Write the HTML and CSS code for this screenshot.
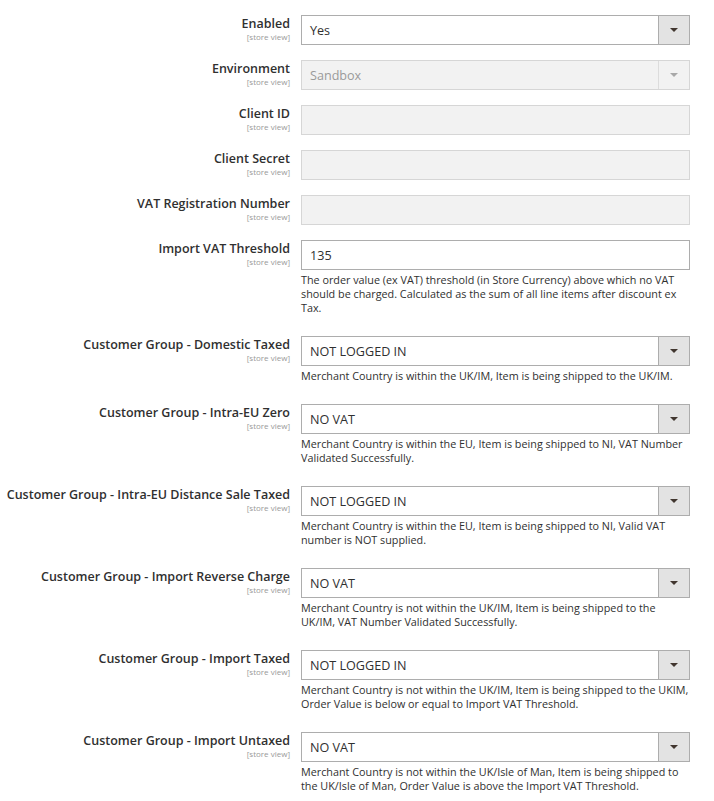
FILE: index.html
```html
<!DOCTYPE html>
<html lang="en">
<head>
<meta charset="utf-8">
<title>Config</title>
<link rel="stylesheet" href="styles.css">
</head>
<body>
<div class="form">
  <div class="row">
    <div class="label"><span class="name">Enabled</span><span class="scope">[store view]</span></div>
    <div class="control"><div class="select"><span class="value">Yes</span><span class="arrow"></span></div></div>
  </div>
  <div class="row">
    <div class="label"><span class="name">Environment</span><span class="scope">[store view]</span></div>
    <div class="control"><div class="select disabled"><span class="value">Sandbox</span><span class="arrow"></span></div></div>
  </div>
  <div class="row">
    <div class="label"><span class="name">Client ID</span><span class="scope">[store view]</span></div>
    <div class="control"><div class="input disabled"></div></div>
  </div>
  <div class="row">
    <div class="label"><span class="name">Client Secret</span><span class="scope">[store view]</span></div>
    <div class="control"><div class="input disabled"></div></div>
  </div>
  <div class="row">
    <div class="label"><span class="name">VAT Registration Number</span><span class="scope">[store view]</span></div>
    <div class="control"><div class="input disabled"></div></div>
  </div>
  <div class="row">
    <div class="label"><span class="name">Import VAT Threshold</span><span class="scope">[store view]</span></div>
    <div class="control"><div class="input"><span class="value">135</span></div>
      <p class="note">The order value (ex VAT) threshold (in Store Currency) above which no VAT should be charged. Calculated as the sum of all line items after discount ex Tax.</p></div>
  </div>
  <div class="row">
    <div class="label"><span class="name">Customer Group - Domestic Taxed</span><span class="scope">[store view]</span></div>
    <div class="control"><div class="select"><span class="value">NOT LOGGED IN</span><span class="arrow"></span></div>
      <p class="note">Merchant Country is within the UK/IM, Item is being shipped to the UK/IM.</p></div>
  </div>
  <div class="row">
    <div class="label"><span class="name">Customer Group - Intra-EU Zero</span><span class="scope">[store view]</span></div>
    <div class="control"><div class="select"><span class="value">NO VAT</span><span class="arrow"></span></div>
      <p class="note">Merchant Country is within the EU, Item is being shipped to NI, VAT Number Validated Successfully.</p></div>
  </div>
  <div class="row">
    <div class="label"><span class="name">Customer Group - Intra-EU Distance Sale Taxed</span><span class="scope">[store view]</span></div>
    <div class="control"><div class="select"><span class="value">NOT LOGGED IN</span><span class="arrow"></span></div>
      <p class="note">Merchant Country is within the EU, Item is being shipped to NI, Valid VAT number is NOT supplied.</p></div>
  </div>
  <div class="row">
    <div class="label"><span class="name">Customer Group - Import Reverse Charge</span><span class="scope">[store view]</span></div>
    <div class="control"><div class="select"><span class="value">NO VAT</span><span class="arrow"></span></div>
      <p class="note">Merchant Country is not within the UK/IM, Item is being shipped to the UK/IM, VAT Number Validated Successfully.</p></div>
  </div>
  <div class="row">
    <div class="label"><span class="name">Customer Group - Import Taxed</span><span class="scope">[store view]</span></div>
    <div class="control"><div class="select"><span class="value">NOT LOGGED IN</span><span class="arrow"></span></div>
      <p class="note">Merchant Country is not within the UK/IM, Item is being shipped to the UKIM, Order Value is below or equal to Import VAT Threshold.</p></div>
  </div>
  <div class="row">
    <div class="label"><span class="name">Customer Group - Import Untaxed</span><span class="scope">[store view]</span></div>
    <div class="control"><div class="select"><span class="value">NO VAT</span><span class="arrow"></span></div>
      <p class="note">Merchant Country is not within the UK/Isle of Man, Item is being shipped to the UK/Isle of Man, Order Value is above the Import VAT Threshold.</p></div>
  </div>
</div>
</body>
</html>
```

FILE: styles.css
```css
html, body {
  margin: 0;
  padding: 0;
  background: #ffffff;
}
body {
  font-family: "Open Sans", "Noto Sans", sans-serif;
  color: #303030;
}
.form {
  display: flex;
  flex-direction: column;
  gap: 15px;
  padding-top: 15px;
}
.row {
  display: grid;
  grid-template-columns: 290px 389px;
  column-gap: 11px;
  align-items: start;
}
.label {
  display: flex;
  flex-direction: column;
  align-items: flex-end;
  text-align: right;
  white-space: nowrap;
}
.name {
  font-size: 12.5px;
  font-weight: 600;
  line-height: 17px;
  color: #303030;
}
.scope {
  font-size: 8px;
  line-height: 10px;
  color: #999999;
  margin-top: 0;
}
.control {
  display: flex;
  flex-direction: column;
}
.select, .input {
  box-sizing: border-box;
  height: 30px;
  border: 1px solid #adadad;
  background: #ffffff;
  display: flex;
  align-items: center;
}
.value {
  flex: 1;
  padding-left: 8px;
  font-size: 12.6px;
  color: #303030;
}
.arrow {
  width: 30px;
  height: 100%;
  border-left: 1px solid #adadad;
  background: #e3e3e3;
  display: flex;
  align-items: center;
  justify-content: center;
}
.arrow::before {
  content: "";
  width: 0;
  height: 0;
  border-left: 4px solid transparent;
  border-right: 4px solid transparent;
  border-top: 4px solid #41362f;
}
.disabled {
  background: #f2f2f2;
  border-color: #d6d6d6;
}
.disabled .value {
  color: #9a9a9a;
}
.disabled .arrow {
  background: #f2f2f2;
  border-left-color: #dcdcdc;
}
.disabled .arrow::before {
  border-top-color: #a8a8a8;
}
.note {
  margin: 3px 0 6px;
  font-size: 10.8px;
  line-height: 14px;
  color: #303030;
}
```
